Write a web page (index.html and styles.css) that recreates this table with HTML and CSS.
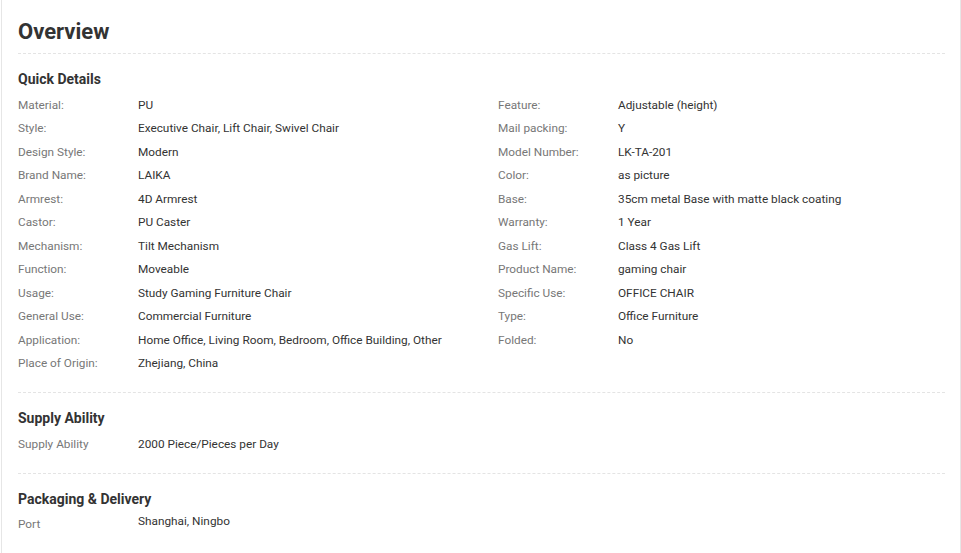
FILE: index.html
```html
<!DOCTYPE html>
<html>
<head>
<meta charset="utf-8">
<link rel="stylesheet" href="styles.css">
</head>
<body>
<div class="panel">
  <h1 class="title">Overview</h1>

  <section class="section">
    <h2 class="section-title">Quick Details</h2>
    <div class="cols">
      <div class="col">
        <div class="row"><span class="label">Material:</span><span class="value">PU</span></div>
        <div class="row"><span class="label">Style:</span><span class="value">Executive Chair, Lift Chair, Swivel Chair</span></div>
        <div class="row"><span class="label">Design Style:</span><span class="value">Modern</span></div>
        <div class="row"><span class="label">Brand Name:</span><span class="value">LAIKA</span></div>
        <div class="row"><span class="label">Armrest:</span><span class="value">4D Armrest</span></div>
        <div class="row"><span class="label">Castor:</span><span class="value">PU Caster</span></div>
        <div class="row"><span class="label">Mechanism:</span><span class="value">Tilt Mechanism</span></div>
        <div class="row"><span class="label">Function:</span><span class="value">Moveable</span></div>
        <div class="row"><span class="label">Usage:</span><span class="value">Study Gaming Furniture Chair</span></div>
        <div class="row"><span class="label">General Use:</span><span class="value">Commercial Furniture</span></div>
        <div class="row"><span class="label">Application:</span><span class="value">Home Office, Living Room, Bedroom, Office Building, Other</span></div>
        <div class="row"><span class="label">Place of Origin:</span><span class="value">Zhejiang, China</span></div>
      </div>
      <div class="col">
        <div class="row"><span class="label">Feature:</span><span class="value">Adjustable (height)</span></div>
        <div class="row"><span class="label">Mail packing:</span><span class="value">Y</span></div>
        <div class="row"><span class="label">Model Number:</span><span class="value">LK-TA-201</span></div>
        <div class="row"><span class="label">Color:</span><span class="value">as picture</span></div>
        <div class="row"><span class="label">Base:</span><span class="value">35cm metal Base with matte black coating</span></div>
        <div class="row"><span class="label">Warranty:</span><span class="value">1 Year</span></div>
        <div class="row"><span class="label">Gas Lift:</span><span class="value">Class 4 Gas Lift</span></div>
        <div class="row"><span class="label">Product Name:</span><span class="value">gaming chair</span></div>
        <div class="row"><span class="label">Specific Use:</span><span class="value">OFFICE CHAIR</span></div>
        <div class="row"><span class="label">Type:</span><span class="value">Office Furniture</span></div>
        <div class="row"><span class="label">Folded:</span><span class="value">No</span></div>
      </div>
    </div>
  </section>

  <section class="section">
    <h2 class="section-title">Supply Ability</h2>
    <div class="row"><span class="label">Supply Ability</span><span class="value">2000 Piece/Pieces per Day</span></div>
  </section>

  <section class="section">
    <h2 class="section-title">Packaging &amp; Delivery</h2>
    <div class="row row-top"><span class="label">Port</span><span class="value value-tight">Shanghai, Ningbo</span></div>
  </section>
</div>
</body>
</html>
```

FILE: styles.css
```css
html, body {
  margin: 0;
  padding: 0;
  background: #fff;
}

body {
  font-family: Roboto, "Liberation Sans", Arial, sans-serif;
  color: #333;
}

.panel {
  box-sizing: border-box;
  width: 960px;
  margin-left: 1px;
  min-height: 553px;
  padding: 0 15px 0 16px;
  border-left: 1px solid #e6e6e6;
  border-right: 1px solid #e6e6e6;
}

.title {
  margin: 0;
  padding: 17px 0 6px;
  font-size: 22px;
  line-height: 30px;
  font-weight: 700;
  color: #333;
  border-bottom: 1px dashed #e4e4e4;
}

.section {
  padding: 15px 0 16.5px;
  border-bottom: 1px dashed #e4e4e4;
}

.section-title {
  margin: 0 0 4.5px;
  font-size: 14px;
  line-height: 20px;
  font-weight: 700;
  color: #333;
}

.cols {
  display: grid;
  grid-template-columns: 480px 1fr;
}

.row {
  display: flex;
  font-size: 11.8px;
  line-height: 23.5px;
}

.row-top {
  align-items: flex-start;
}

.label {
  flex: 0 0 120px;
  color: #777;
}

.value {
  color: #333;
}

.value-tight {
  line-height: 16px;
}
```
